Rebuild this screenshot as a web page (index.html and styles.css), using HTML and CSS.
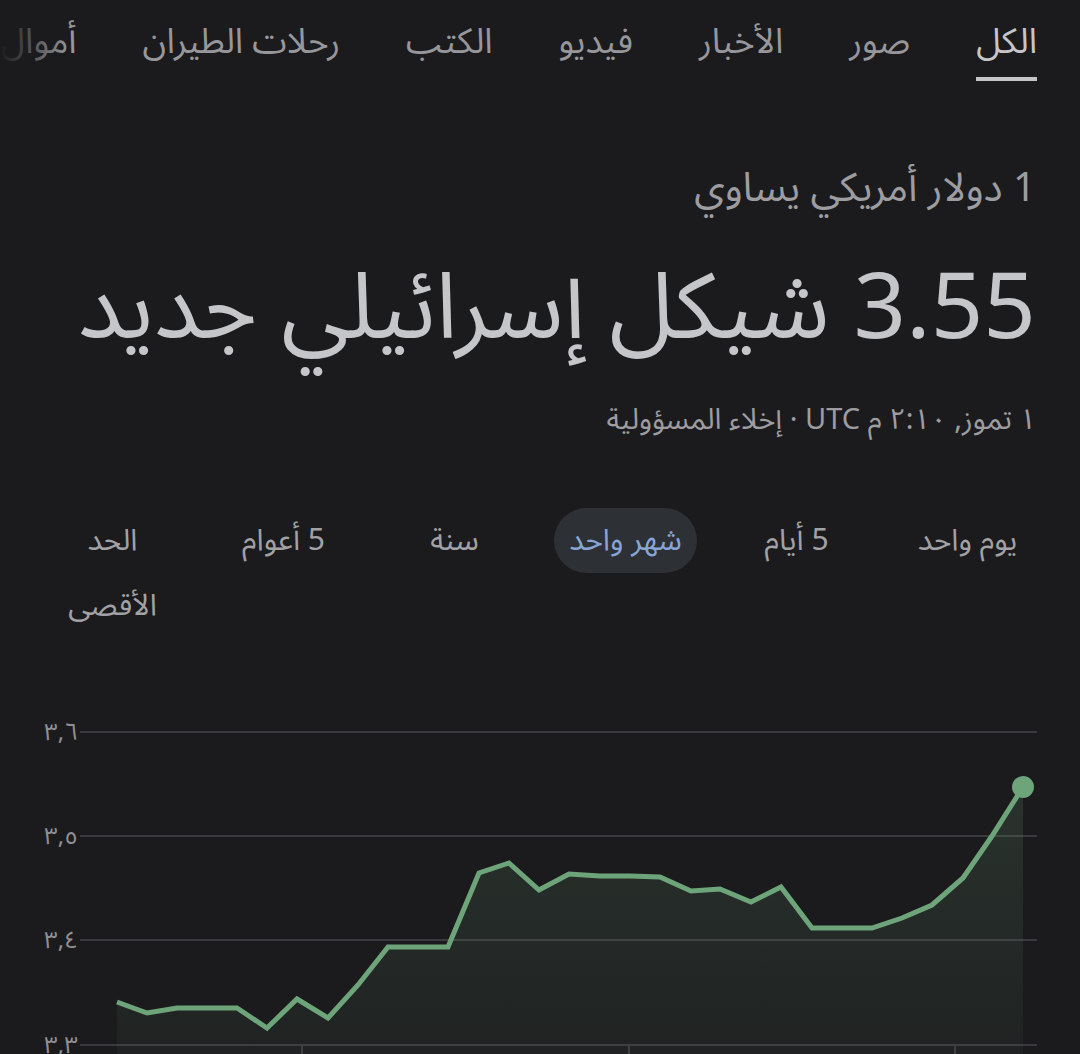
FILE: index.html
```html
<!DOCTYPE html>
<html lang="ar" dir="rtl">
<head>
<meta charset="utf-8">
<link rel="stylesheet" href="styles.css">
</head>
<body>
<nav class="tabs">
  <a class="tab active">الكل</a>
  <a class="tab">صور</a>
  <a class="tab">الأخبار</a>
  <a class="tab">فيديو</a>
  <a class="tab">الكتب</a>
  <a class="tab">رحلات الطيران</a>
  <a class="tab">أموال</a>
  <div class="fade"></div>
</nav>

<main class="content">
  <div class="from">1 دولار أمريكي يساوي</div>
  <div class="result">3.55 شيكل إسرائيلي جديد</div>
  <div class="meta">١ تموز, ٢:١٠ م UTC · <span class="link">إخلاء المسؤولية</span></div>

  <div class="ranges">
    <div class="range"><span class="chip">يوم واحد</span></div>
    <div class="range"><span class="chip">5 أيام</span></div>
    <div class="range"><span class="chip selected">شهر واحد</span></div>
    <div class="range"><span class="chip">سنة</span></div>
    <div class="range"><span class="chip">5 أعوام</span></div>
    <div class="range"><span class="chip">الحد<br>الأقصى</span></div>
  </div>

  <div class="chart">
    <svg class="chart-svg" width="1080" height="360" viewBox="0 700 1080 360" xmlns="http://www.w3.org/2000/svg">
      <defs>
        <linearGradient id="area" x1="0" y1="787" x2="0" y2="1060" gradientUnits="userSpaceOnUse">
          <stop offset="0" stop-color="#6fa77a" stop-opacity="0.17"/>
          <stop offset="1" stop-color="#6fa77a" stop-opacity="0.05"/>
        </linearGradient>
      </defs>
      <g stroke="#3a3a3e" stroke-width="2">
        <line x1="80" y1="732" x2="1037" y2="732"/>
        <line x1="80" y1="836" x2="1037" y2="836"/>
        <line x1="80" y1="940" x2="1037" y2="940"/>
        <line x1="80" y1="1045" x2="1037" y2="1045"/>
        <line x1="302" y1="1045" x2="302" y2="1060"/>
        <line x1="629" y1="1045" x2="629" y2="1060"/>
        <line x1="955" y1="1045" x2="955" y2="1060"/>
      </g>
      <g class="axis" text-anchor="end">
        <text x="78" y="740">٣,٦</text>
        <text x="78" y="844">٣,٥</text>
        <text x="78" y="948">٣,٤</text>
        <text x="78" y="1053">٣,٣</text>
      </g>
      <polygon fill="url(#area)" points="117,1002 147,1013 177,1008 237,1008 267,1028 297,999 328,1018 358,985 388,947 448,947 479,873 509,863 539,890 569,874 600,876 630,876 660,877 691,891 720,889 751,902 781,887 812,928 872,928 902,918 932,905 963,878 992,836 1023,787 1023,1060 117,1060"/>
      <polyline fill="none" stroke="#6ea479" stroke-width="5" stroke-linejoin="miter" points="117,1002 147,1013 177,1008 237,1008 267,1028 297,999 328,1018 358,985 388,947 448,947 479,873 509,863 539,890 569,874 600,876 630,876 660,877 691,891 720,889 751,902 781,887 812,928 872,928 902,918 932,905 963,878 992,836 1023,787"/>
      <circle cx="1023" cy="787" r="11" fill="#6ea479"/>
    </svg>
  </div>
</main>
</body>
</html>
```

FILE: styles.css
```css
html, body {
  margin: 0;
  padding: 0;
  background: #1b1b1d;
}

body {
  width: 1080px;
  height: 1054px;
  overflow: hidden;
  font-family: "Noto Sans Arabic", "Noto Sans Arabic UI", Roboto, "DejaVu Sans", sans-serif;
  color: #9d9da1;
}

.tabs {
  position: relative;
  display: flex;
  gap: 66px;
  padding: 0 43px 0 0;
  height: 81px;
  overflow: hidden;
  white-space: nowrap;
}

.tab {
  display: block;
  flex: none;
  font-size: 35px;
  line-height: 44px;
  padding: 20px 0 13px;
  color: #97979b;
  border-bottom: 4px solid transparent;
}

.tab.active {
  color: #c6c6c8;
  border-bottom-color: #c6c6c8;
}

.fade {
  position: absolute;
  left: 0;
  top: 0;
  width: 70px;
  height: 81px;
  background: linear-gradient(to right, #1b1b1d 0%, rgba(27,27,29,0) 100%);
}

.content {
  padding: 0 44px;
}

.from {
  margin-top: 76px;
  font-size: 40px;
  line-height: 64px;
  color: #9d9da1;
}

.result {
  margin-top: 18px;
  font-size: 92px;
  line-height: 140px;
  color: #c5c6c9;
  white-space: nowrap;
}

.meta {
  margin-top: 17px;
  font-size: 29px;
  line-height: 48px;
  color: #9d9da1;
}

.link {
  color: #9d9da1;
}

.ranges {
  display: grid;
  grid-template-columns: repeat(6, 1fr);
  margin: 64px -17px 0;
  text-align: center;
}

.range {
  display: flex;
  justify-content: center;
  align-items: flex-start;
}

.chip {
  display: inline-block;
  font-size: 30px;
  line-height: 65px;
  padding: 0 15px;
  border-radius: 33px;
  color: #a2a2a6;
}

.chip.selected {
  background: #2d3035;
  color: #87a5d7;
}

.chart {
  margin: 62px -44px 0;
}

.chart-svg {
  display: block;
  direction: ltr;
}

.axis text {
  font-size: 24px;
  fill: #8f8f93;
}
```
